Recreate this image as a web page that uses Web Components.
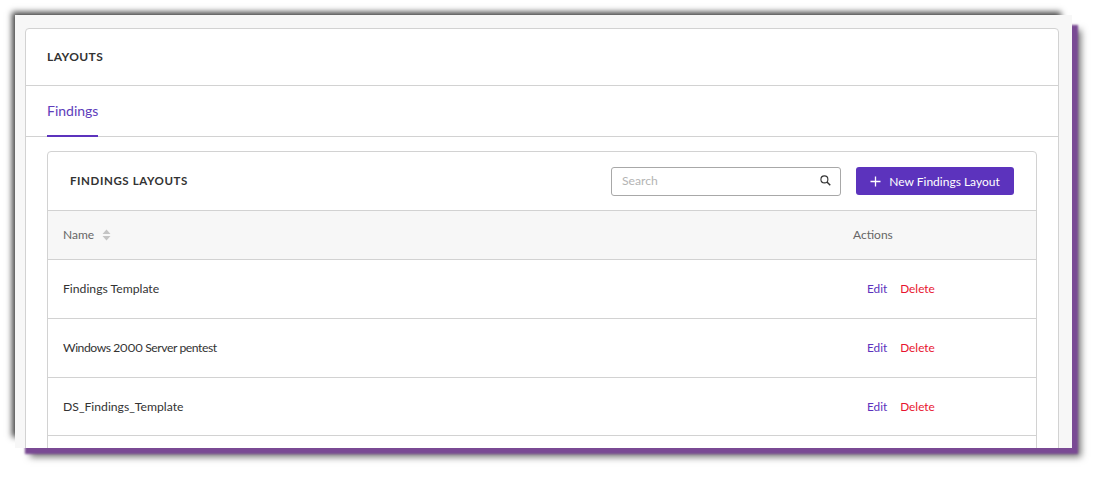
<!DOCTYPE html>
<html lang="en">
<head>
<meta charset="utf-8">
<title>Layouts</title>
<style>
html, body { margin: 0; background: #fff; height: 100%; overflow: hidden; }
body { font-family: Lato, "Liberation Sans", sans-serif; color: #333; font-variant-numeric: proportional-nums; }
</style>
</head>
<body>
<template id="shot-frame-tpl">
  <style>
    :host { display: block; width: 1057px; height: 433px; margin: 15px 0 0 15px; background: #f7f7f7;
      box-shadow: 8px 8px 2px -2px #7a4a94, 12px 12px 7px -3px #777, -7px -7px 6px -4px #444; }
    .clip { height: 100%; overflow: hidden; padding: 13px 13px 0 10px; box-sizing: border-box; }
  </style>
  <div class="clip"><slot></slot></div>
</template>

<template id="layouts-page-tpl">
  <style>
    :host { display: block; background: #fff; border: 1px solid #d2d2d2; border-radius: 4px 4px 0 0; min-height: 500px; }
    header { display: flex; align-items: center; padding: 0 0 2px 21px; box-sizing: border-box; height: 57px; border-bottom: 1px solid #d2d2d2;
      font-size: 12px; font-weight: 700; letter-spacing: .4px; color: #333; }
    nav { height: 50px; display: flex; padding-left: 21px; border-bottom: 1px solid #d2d2d2; }
    nav a { display: flex; align-items: center; font-size: 14px; color: #5e3dbb; margin-bottom: -1px; border-bottom: 2px solid #5c33bd; width: 51px; box-sizing: border-box; }
    .body { padding: 14px 21px 0; }
  </style>
  <header>LAYOUTS</header>
  <nav><a>Findings</a></nav>
  <div class="body"><slot></slot></div>
</template>

<template id="layout-table-tpl">
  <style>
    :host { display: block; border: 1px solid #d2d2d2; border-radius: 4px 4px 0 0; }
    .bar { height: 58px; display: flex; align-items: center; padding: 0 22px; border-bottom: 1px solid #d2d2d2; }
    h2 { margin: 0 0 1px; flex: 1; font-size: 11.5px; font-weight: 700; letter-spacing: .6px; color: #333; }
    .search { width: 230px; height: 29px; box-sizing: border-box; border: 1px solid #a8a8a8; border-radius: 3px; display: flex; align-items: center; justify-content: space-between; padding: 0 9px 2px 10px; margin-right: 15px; font-size: 12.2px; color: #b4b4b4; }
    .btn { width: 158px; height: 28px; background: #5c33bd; color: #fff; border-radius: 3px; display: flex; align-items: center; justify-content: center; gap: 8px; font-size: 12px; }
    .head { height: 48px; box-sizing: content-box; display: grid; grid-template-columns: 790px 1fr; align-items: center; padding-left: 15px; background: #f7f7f7; border-bottom: 1px solid #d2d2d2; font-size: 12px; color: #666; }
    .head > div { margin-bottom: 1px; }
    .name { display: flex; align-items: center; gap: 8px; }
  </style>
  <div class="bar">
    <h2>FINDINGS LAYOUTS</h2>
    <div class="search"><span>Search</span>
      <svg width="11" height="11" viewBox="0 0 12 12" fill="none" stroke="#333" stroke-width="1.2"><circle cx="4.8" cy="4.8" r="3.8"/><path d="M7.6 7.6 11.2 11.2" stroke-width="1.6"/></svg>
    </div>
    <div class="btn">
      <svg width="11" height="11" viewBox="0 0 11 11" stroke="#fff" stroke-width="1.3"><path d="M5.5 0.5v10M0.5 5.5h10"/></svg>
      <span>New Findings Layout</span>
    </div>
  </div>
  <div class="head">
    <div class="name"><span>Name</span>
      <svg width="9" height="12" viewBox="0 0 9 12" fill="#c4c4c4"><path d="M4.5 0.5 8.5 5H0.5zM4.5 11.5 0.5 7H8.5z"/></svg>
    </div>
    <div>Actions</div>
  </div>
  <slot></slot>
</template>

<template id="layout-row-tpl">
  <style>
    :host { display: grid; grid-template-columns: 804px 1fr; align-items: center; height: 57.75px; padding: 0 0 0 15px; border-bottom: 1px solid #d2d2d2; font-size: 12.2px; color: #333; }
    .actions { display: flex; gap: 13px; font-size: 11.8px; letter-spacing: normal; }
    .edit { color: #5c33bd; }
    .del { color: #e8132e; }
  </style>
  <div><slot></slot></div>
  <div class="actions"><span class="edit">Edit</span><span class="del">Delete</span></div>
</template>

<shot-frame>
  <layouts-page>
    <layout-table>
      <layout-row>Findings Template</layout-row>
      <layout-row><span style="letter-spacing:-.44px">Windows 2000 Server pentest</span></layout-row>
      <layout-row>DS_Findings_Template</layout-row>
      <layout-row>Web Application Template</layout-row>
    </layout-table>
  </layouts-page>
</shot-frame>

<script>
function define(name) {
  const tpl = document.getElementById(name + "-tpl");
  customElements.define(name, class extends HTMLElement {
    constructor() {
      super();
      this.attachShadow({ mode: "open" });
      this.shadowRoot.appendChild(tpl.content.cloneNode(true));
    }
  });
}
["shot-frame", "layouts-page", "layout-table", "layout-row"].forEach(define);
</script>
</body>
</html>
